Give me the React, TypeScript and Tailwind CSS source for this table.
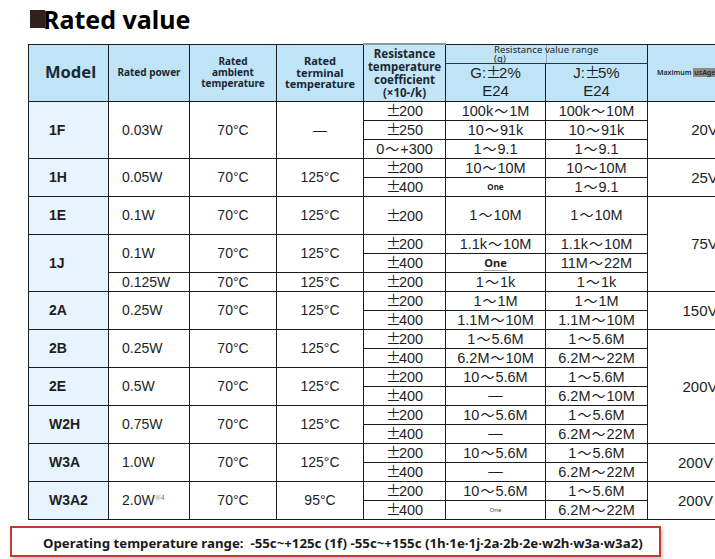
import React from "react";

function Txt({ s }: { s: string }) {
  const parts = s.split(/([～±])/);
  return (
    <>
      {parts.map((p, i) =>
        p === "～" ? (
          <span key={i} className="inline-block w-[16px] text-center font-['Noto_Sans_CJK_JP',sans-serif] text-[14px] leading-none">
            ～
          </span>
        ) : p === "±" ? (
          <span key={i} className="inline-block w-[13px] text-center font-['Noto_Sans_CJK_JP',sans-serif] text-[15px] leading-none">
            ±
          </span>
        ) : (
          <React.Fragment key={i}>{p}</React.Fragment>
        )
      )}
    </>
  );
}

const B = "border border-[#1c1c1c] p-0 align-middle";
const MODEL = `${B} bg-[#e7f4fd] text-left pl-[20px] font-bold text-[14px]`;
const POW = `${B} text-left pl-[13px] text-[14px]`;
const C = `${B} text-center text-[14px]`;
const V = `${B} text-center text-[14.5px]`;
const MAX = `${B} text-center text-[15px]`;
const HD = `${B} bg-[#bfe3f7] text-center font-['Noto_Sans',sans-serif] font-bold text-[#1b2733]`;

export default function App() {
  return (
    <div className="w-[715px] h-[559px] overflow-hidden bg-white relative font-['Liberation_Sans',Arial,sans-serif] text-[#1e1e1e]">
      <div className="flex items-center h-[43px] pl-[30px] pb-[5px]">
        <div className="w-[15px] h-[18px] bg-[#33221c] blur-[0.6px]" />
        <div className="-ml-[2px] font-['Noto_Sans',sans-serif] font-bold text-[25px] leading-none text-black">
          Rated value
        </div>
      </div>

      <div className="pl-[28px]">
        <table className="border-collapse table-fixed w-[715px] leading-none">
          <colgroup>
            <col className="w-[80px]" />
            <col className="w-[81px]" />
            <col className="w-[87px]" />
            <col className="w-[87px]" />
            <col className="w-[82px]" />
            <col className="w-[100px]" />
            <col className="w-[102px]" />
            <col className="w-[96px]" />
          </colgroup>
          <thead>
            <tr className="h-[19px]">
              <th rowSpan={2} className={`${HD} text-[16.5px] text-left pl-[16px]`}>Model</th>
              <th rowSpan={2} className={`${HD} text-[10px] leading-[11px]`}>Rated power</th>
              <th rowSpan={2} className={`${HD} text-[10px] leading-[11px]`}>
                Rated
                <br />
                ambient
                <br />
                temperature
              </th>
              <th rowSpan={2} className={`${HD} text-[11px] leading-[11.5px]`}>
                Rated
                <br />
                terminal
                <br />
                temperature
              </th>
              <th rowSpan={2} className={`${HD} bg-[#c3e5f6] text-[11.5px] leading-[13px] border-t-[2px] border-t-[#8a9aa5]`}>
                Resistance
                <br />
                temperature
                <br />
                coefficient
                <br />
                (×10-/k)
              </th>
              <th colSpan={2} className={`${HD} relative font-normal border-b-[#333]`}>
                <div className="absolute left-[100px] top-0 h-[18px] w-px bg-[#9aa5ad]" />
                <div className="absolute left-[48px] top-0 text-left text-[9.5px] leading-[9.5px] tracking-[0.1px] text-[#222] whitespace-nowrap">
                  Resistance value range
                  <br />
                  (q)
                </div>
              </th>
              <th rowSpan={2} className={`${HD} font-semibold text-left pl-[9px] text-[7px]`}>
                <span className="whitespace-nowrap">
                  Maximum{" "}
                  <span className="bg-[#8e8a84] text-[#2a2a2a] px-[1px]">usAge</span>
                </span>
              </th>
            </tr>
            <tr className="h-[38px]">
              <th className={`${B} bg-[#bfe3f7] font-normal text-[15px] leading-[18px] font-['Liberation_Sans',Arial,sans-serif]`}>
                <Txt s="G:±2%" />
                <br />
                E24
              </th>
              <th className={`${B} bg-[#bfe3f7] font-normal text-[15px] leading-[18px] font-['Liberation_Sans',Arial,sans-serif]`}>
                <Txt s="J:±5%" />
                <br />
                E24
              </th>
            </tr>
          </thead>
          <tbody>
            {/* 1F */}
            <tr className="h-[19px]">
              <td rowSpan={3} className={MODEL}>1F</td>
              <td rowSpan={3} className={POW}>0.03W</td>
              <td rowSpan={3} className={C}>70°C</td>
              <td rowSpan={3} className={C}>—</td>
              <td className={V}><Txt s="±200" /></td>
              <td className={V}><Txt s="100k～1M" /></td>
              <td className={V}><Txt s="100k～10M" /></td>
              <td rowSpan={3} className={`${MAX} pl-[18px]`}>20V</td>
            </tr>
            <tr className="h-[19px]">
              <td className={V}><Txt s="±250" /></td>
              <td className={V}><Txt s="10～91k" /></td>
              <td className={V}><Txt s="10～91k" /></td>
            </tr>
            <tr className="h-[19px]">
              <td className={V}><Txt s="0～+300" /></td>
              <td className={V}><Txt s="1～9.1" /></td>
              <td className={V}><Txt s="1～9.1" /></td>
            </tr>
            {/* 1H */}
            <tr className="h-[19px]">
              <td rowSpan={2} className={MODEL}>1H</td>
              <td rowSpan={2} className={POW}>0.05W</td>
              <td rowSpan={2} className={C}>70°C</td>
              <td rowSpan={2} className={C}>125°C</td>
              <td className={V}><Txt s="±200" /></td>
              <td className={V}><Txt s="10～10M" /></td>
              <td className={V}><Txt s="10～10M" /></td>
              <td rowSpan={2} className={`${MAX} pl-[18px]`}>25V</td>
            </tr>
            <tr className="h-[19px]">
              <td className={V}><Txt s="±400" /></td>
              <td className={`${B} text-center text-[8px] font-bold font-['Noto_Sans',sans-serif]`}>One</td>
              <td className={V}><Txt s="1～9.1" /></td>
            </tr>
            {/* 1E */}
            <tr className="h-[38px]">
              <td className={MODEL}>1E</td>
              <td className={POW}>0.1W</td>
              <td className={C}>70°C</td>
              <td className={C}>125°C</td>
              <td className={V}><Txt s="±200" /></td>
              <td className={V}><Txt s="1～10M" /></td>
              <td className={V}><Txt s="1～10M" /></td>
              <td rowSpan={4} className={`${MAX} pl-[18px]`}>75V</td>
            </tr>
            {/* 1J */}
            <tr className="h-[19px]">
              <td rowSpan={3} className={MODEL}>1J</td>
              <td rowSpan={2} className={POW}>0.1W</td>
              <td rowSpan={2} className={C}>70°C</td>
              <td rowSpan={2} className={C}>125°C</td>
              <td className={V}><Txt s="±200" /></td>
              <td className={V}><Txt s="1.1k～10M" /></td>
              <td className={V}><Txt s="1.1k～10M" /></td>
            </tr>
            <tr className="h-[19px]">
              <td className={V}><Txt s="±400" /></td>
              <td className={`${B} text-center text-[11px] font-bold font-['Noto_Sans',sans-serif]`}>
                <span className="border-b border-[#aaa]">One</span>
              </td>
              <td className={V}><Txt s="11M～22M" /></td>
            </tr>
            <tr className="h-[19px]">
              <td className={POW}>0.125W</td>
              <td className={C}>70°C</td>
              <td className={C}>125°C</td>
              <td className={V}><Txt s="±200" /></td>
              <td className={V}><Txt s="1～1k" /></td>
              <td className={V}><Txt s="1～1k" /></td>
            </tr>
            {/* 2A */}
            <tr className="h-[19px]">
              <td rowSpan={2} className={MODEL}>2A</td>
              <td rowSpan={2} className={POW}>0.25W</td>
              <td rowSpan={2} className={C}>70°C</td>
              <td rowSpan={2} className={C}>125°C</td>
              <td className={V}><Txt s="±200" /></td>
              <td className={V}><Txt s="1～1M" /></td>
              <td className={V}><Txt s="1～1M" /></td>
              <td rowSpan={2} className={`${MAX} pl-[9px]`}>150V</td>
            </tr>
            <tr className="h-[19px]">
              <td className={V}><Txt s="±400" /></td>
              <td className={V}><Txt s="1.1M～10M" /></td>
              <td className={V}><Txt s="1.1M～10M" /></td>
            </tr>
            {/* 2B */}
            <tr className="h-[19px]">
              <td rowSpan={2} className={MODEL}>2B</td>
              <td rowSpan={2} className={POW}>0.25W</td>
              <td rowSpan={2} className={C}>70°C</td>
              <td rowSpan={2} className={C}>125°C</td>
              <td className={V}><Txt s="±200" /></td>
              <td className={V}><Txt s="1～5.6M" /></td>
              <td className={V}><Txt s="1～5.6M" /></td>
              <td rowSpan={6} className={`${MAX} pl-[9px]`}>200V</td>
            </tr>
            <tr className="h-[19px]">
              <td className={V}><Txt s="±400" /></td>
              <td className={V}><Txt s="6.2M～10M" /></td>
              <td className={V}><Txt s="6.2M～22M" /></td>
            </tr>
            {/* 2E */}
            <tr className="h-[19px]">
              <td rowSpan={2} className={MODEL}>2E</td>
              <td rowSpan={2} className={POW}>0.5W</td>
              <td rowSpan={2} className={C}>70°C</td>
              <td rowSpan={2} className={C}>125°C</td>
              <td className={V}><Txt s="±200" /></td>
              <td className={V}><Txt s="10～5.6M" /></td>
              <td className={V}><Txt s="1～5.6M" /></td>
            </tr>
            <tr className="h-[19px]">
              <td className={V}><Txt s="±400" /></td>
              <td className={V}>—</td>
              <td className={V}><Txt s="6.2M～10M" /></td>
            </tr>
            {/* W2H */}
            <tr className="h-[19px]">
              <td rowSpan={2} className={MODEL}>W2H</td>
              <td rowSpan={2} className={POW}>0.75W</td>
              <td rowSpan={2} className={C}>70°C</td>
              <td rowSpan={2} className={C}>125°C</td>
              <td className={V}><Txt s="±200" /></td>
              <td className={V}><Txt s="10～5.6M" /></td>
              <td className={V}><Txt s="1～5.6M" /></td>
            </tr>
            <tr className="h-[19px]">
              <td className={V}><Txt s="±400" /></td>
              <td className={V}>—</td>
              <td className={V}><Txt s="6.2M～22M" /></td>
            </tr>
            {/* W3A */}
            <tr className="h-[19px]">
              <td rowSpan={2} className={MODEL}>W3A</td>
              <td rowSpan={2} className={POW}>1.0W</td>
              <td rowSpan={2} className={C}>70°C</td>
              <td rowSpan={2} className={C}>125°C</td>
              <td className={V}><Txt s="±200" /></td>
              <td className={V}><Txt s="10～5.6M" /></td>
              <td className={V}><Txt s="1～5.6M" /></td>
              <td rowSpan={2} className={MAX}>200V</td>
            </tr>
            <tr className="h-[19px]">
              <td className={V}><Txt s="±400" /></td>
              <td className={V}>—</td>
              <td className={V}><Txt s="6.2M～22M" /></td>
            </tr>
            {/* W3A2 */}
            <tr className="h-[19px]">
              <td rowSpan={2} className={MODEL}>W3A2</td>
              <td rowSpan={2} className={POW}>
                2.0W
                <span className="relative -top-[5px] text-[7px] leading-none text-[#777]">※4</span>
              </td>
              <td rowSpan={2} className={C}>70°C</td>
              <td rowSpan={2} className={C}>95°C</td>
              <td className={V}><Txt s="±200" /></td>
              <td className={V}><Txt s="10～5.6M" /></td>
              <td className={V}><Txt s="1～5.6M" /></td>
              <td rowSpan={2} className={MAX}>200V</td>
            </tr>
            <tr className="h-[19px]">
              <td className={V}><Txt s="±400" /></td>
              <td className={`${B} text-center text-[6px] leading-none font-['Noto_Sans',sans-serif] text-[#444]`}>One</td>
              <td className={V}><Txt s="6.2M～22M" /></td>
            </tr>
          </tbody>
        </table>
      </div>

      <div className="ml-[10px] mt-[6px] w-[651px] h-[31px] border-2 border-[#c23b2e] shadow-[2px_3px_3px_rgba(0,0,0,0.22)] flex items-center pl-[31px] pt-[6px]">
        <span className="whitespace-nowrap font-['Noto_Sans',sans-serif] font-bold text-[13.25px] text-[#1a1a1a]">
          Operating temperature range:&nbsp; -55c~+125c (1f) -55c~+155c (1h·1e·1j·2a·2b·2e·w2h·w3a·w3a2)
        </span>
      </div>
    </div>
  );
}
